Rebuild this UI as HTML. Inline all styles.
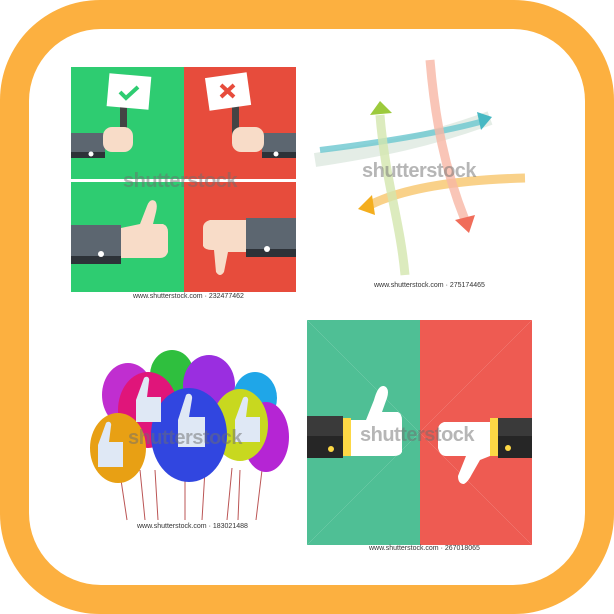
<!DOCTYPE html>
<html><head><style>
html,body{margin:0;padding:0;background:#fff;width:614px;height:614px;overflow:hidden;font-family:"Liberation Sans",sans-serif}
.ring{position:absolute;left:0;top:0;width:614px;height:614px;border-radius:100px;background:#fcb040}
.inner{position:absolute;left:29px;top:29px;width:556px;height:556px;border-radius:72px;background:#fff}
.cap{position:absolute;font-size:7px;color:#333;white-space:nowrap}
.wm{position:absolute;font-size:20px;color:rgba(110,110,110,.5);white-space:nowrap;font-weight:bold;letter-spacing:-0.5px}
</style></head><body>
<div class="ring"></div><div class="inner"></div>

<svg style="position:absolute;left:0;top:0" width="614" height="614">
<!-- panel 1 -->
<rect x="71" y="67" width="113" height="225" fill="#2ecc71"/>
<rect x="184" y="67" width="112" height="225" fill="#e74c3c"/>
<rect x="71" y="179" width="225" height="3" fill="#fff"/>
<rect x="120" y="105" width="7" height="40" fill="#444"/>
<rect x="232" y="105" width="7" height="40" fill="#444"/>
<rect x="108" y="75" width="42" height="33" fill="#fff" transform="rotate(5 129 91)"/>
<path d="M120 92l6 6 12-11" stroke="#2ecc71" stroke-width="4" fill="none"/>
<rect x="207" y="75" width="42" height="33" fill="#fff" transform="rotate(-8 228 91)"/>
<path d="M221 85l13 12M234 85l-13 12" stroke="#e74c3c" stroke-width="4"/>
<rect x="71" y="133" width="34" height="25" fill="#5c6670"/><rect x="71" y="152" width="34" height="6" fill="#2d3238"/>
<rect x="103" y="127" width="30" height="25" rx="9" fill="#f8dcc8"/>
<rect x="262" y="133" width="34" height="25" fill="#5c6670"/><rect x="262" y="152" width="34" height="6" fill="#2d3238"/>
<rect x="232" y="127" width="32" height="25" rx="9" fill="#f8dcc8"/>
<circle cx="91" cy="154" r="2.5" fill="#fff"/><circle cx="276" cy="154" r="2.5" fill="#fff"/>
<rect x="71" y="225" width="50" height="38" fill="#5c6670"/><rect x="71" y="256" width="50" height="8" fill="#2d3238"/>
<path d="M121 228 L140 224 L147 206 Q150 198 155 201 Q158 204 156 212 L153 224 L163 224 Q168 226 168 232 L168 252 Q166 258 160 258 L121 258 Z" fill="#f8dcc8"/>
<rect x="246" y="218" width="50" height="38" fill="#5c6670"/><rect x="246" y="249" width="50" height="8" fill="#2d3238"/>
<path d="M246 220 L210 220 Q203 222 203 228 L203 246 Q205 250 212 250 L214 250 L216 272 Q220 278 224 272 L228 252 L246 252 Z" fill="#f8dcc8"/>
<circle cx="101" cy="254" r="3" fill="#fff"/><circle cx="267" cy="249" r="3" fill="#fff"/>
<!-- panel 2 arrows -->
<path d="M315 160C380 150 430 140 490 118" stroke="#d8e6dc" stroke-width="14" fill="none" opacity=".7"/>
<path d="M320 150C400 140 450 130 480 122" stroke="#6cc7cf" stroke-width="6" fill="none" opacity=".8"/>
<path d="M477 112l15 5-11 13z" fill="#47b8c3"/>
<path d="M525 178C450 180 400 190 370 205" stroke="#f7c56b" stroke-width="9" fill="none" opacity=".8"/>
<path d="M372 195l-14 14 17 6z" fill="#f4ae1e"/>
<path d="M380 115C385 180 400 220 405 275" stroke="#d3e6ae" stroke-width="9" fill="none" opacity=".8"/>
<path d="M370 115l10-14 12 12z" fill="#9cca3c"/>
<path d="M430 60C435 120 445 170 465 220" stroke="#f7b7a5" stroke-width="9" fill="none" opacity=".8"/>
<path d="M455 220l14 13 6-18z" fill="#f06d5a"/>
<!-- panel 3 balloons -->
<g stroke-width="1" fill="none">
<path d="M121 480l6 40M140 470l5 50M155 470l3 50M185 470v50M205 470l-3 50M232 468l-5 52M240 470l-2 50M262 470l-6 50" stroke="#b55"/>
</g>
<ellipse cx="172" cy="375" rx="22" ry="25" fill="#2fbf3e"/>
<ellipse cx="128" cy="395" rx="26" ry="32" fill="#c02ed0"/>
<ellipse cx="209" cy="385" rx="26" ry="30" fill="#9a2ee0"/>
<ellipse cx="255" cy="398" rx="22" ry="26" fill="#1fa6e8"/>
<ellipse cx="148" cy="410" rx="30" ry="38" fill="#e0157a"/>
<ellipse cx="118" cy="448" rx="28" ry="35" fill="#e8a014"/>
<ellipse cx="266" cy="437" rx="23" ry="35" fill="#b525d4"/>
<ellipse cx="240" cy="425" rx="28" ry="36" fill="#c8d81f"/>
<ellipse cx="189" cy="435" rx="38" ry="47" fill="#3146e0"/>
<path d="M178 420l8-25c3-3 7 0 6 4l-3 18h16v30h-27z" fill="#dfe8f5"/>
<path d="M98 445l8-22c3-3 6 0 5 3l-2 16h14v25h-25z" fill="#dfe8f5"/>
<path d="M136 400l8-22c3-3 6 0 5 3l-2 16h14v25h-25z" fill="#dfe8f5"/>
<path d="M235 420l8-22c3-3 6 0 5 3l-2 16h14v25h-25z" fill="#dfe8f5"/>
<!-- panel 4 -->
<rect x="307" y="320" width="113" height="225" fill="#4fbf95"/>
<rect x="420" y="320" width="112" height="225" fill="#ee5b52"/>
<path d="M307 320L532 545M532 320L307 545" stroke="#fff" stroke-width="0.5" opacity=".25"/>
<rect x="307" y="416" width="36" height="42" fill="#3a3a3a"/><rect x="307" y="436" width="36" height="22" fill="#262626"/>
<rect x="343" y="418" width="8" height="38" fill="#fdd845"/>
<circle cx="331" cy="449" r="3" fill="#fdd845"/>
<path d="M351 420 L366 420 L374 400 Q378 385 384 386 Q390 388 387 398 L382 412 L398 412 Q402 414 402 420 L402 452 Q400 456 394 456 L351 456 Z" fill="#fff"/>
<rect x="498" y="418" width="34" height="40" fill="#3a3a3a"/><rect x="498" y="436" width="34" height="22" fill="#262626"/>
<rect x="490" y="418" width="8" height="38" fill="#fdd845"/>
<circle cx="508" cy="448" r="3" fill="#fdd845"/>
<path d="M490 422 L444 422 Q438 424 438 430 L438 448 Q440 456 446 456 L466 456 L458 476 Q458 484 464 484 Q468 482 472 474 L480 460 L490 456 Z" fill="#fff"/>
</svg>

<div class="wm" style="left:123px;top:170px">shutterstock</div>
<div class="wm" style="left:362px;top:160px">shutterstock</div>
<div class="wm" style="left:128px;top:427px">shutterstock</div>
<div class="wm" style="left:360px;top:424px">shutterstock</div>
<div class="cap" style="left:133px;top:293px">www.shutterstock.com · 232477462</div>
<div class="cap" style="left:374px;top:282px">www.shutterstock.com · 275174465</div>
<div class="cap" style="left:137px;top:523px">www.shutterstock.com · 183021488</div>
<div class="cap" style="left:369px;top:545px">www.shutterstock.com · 267018065</div>
</body></html>
